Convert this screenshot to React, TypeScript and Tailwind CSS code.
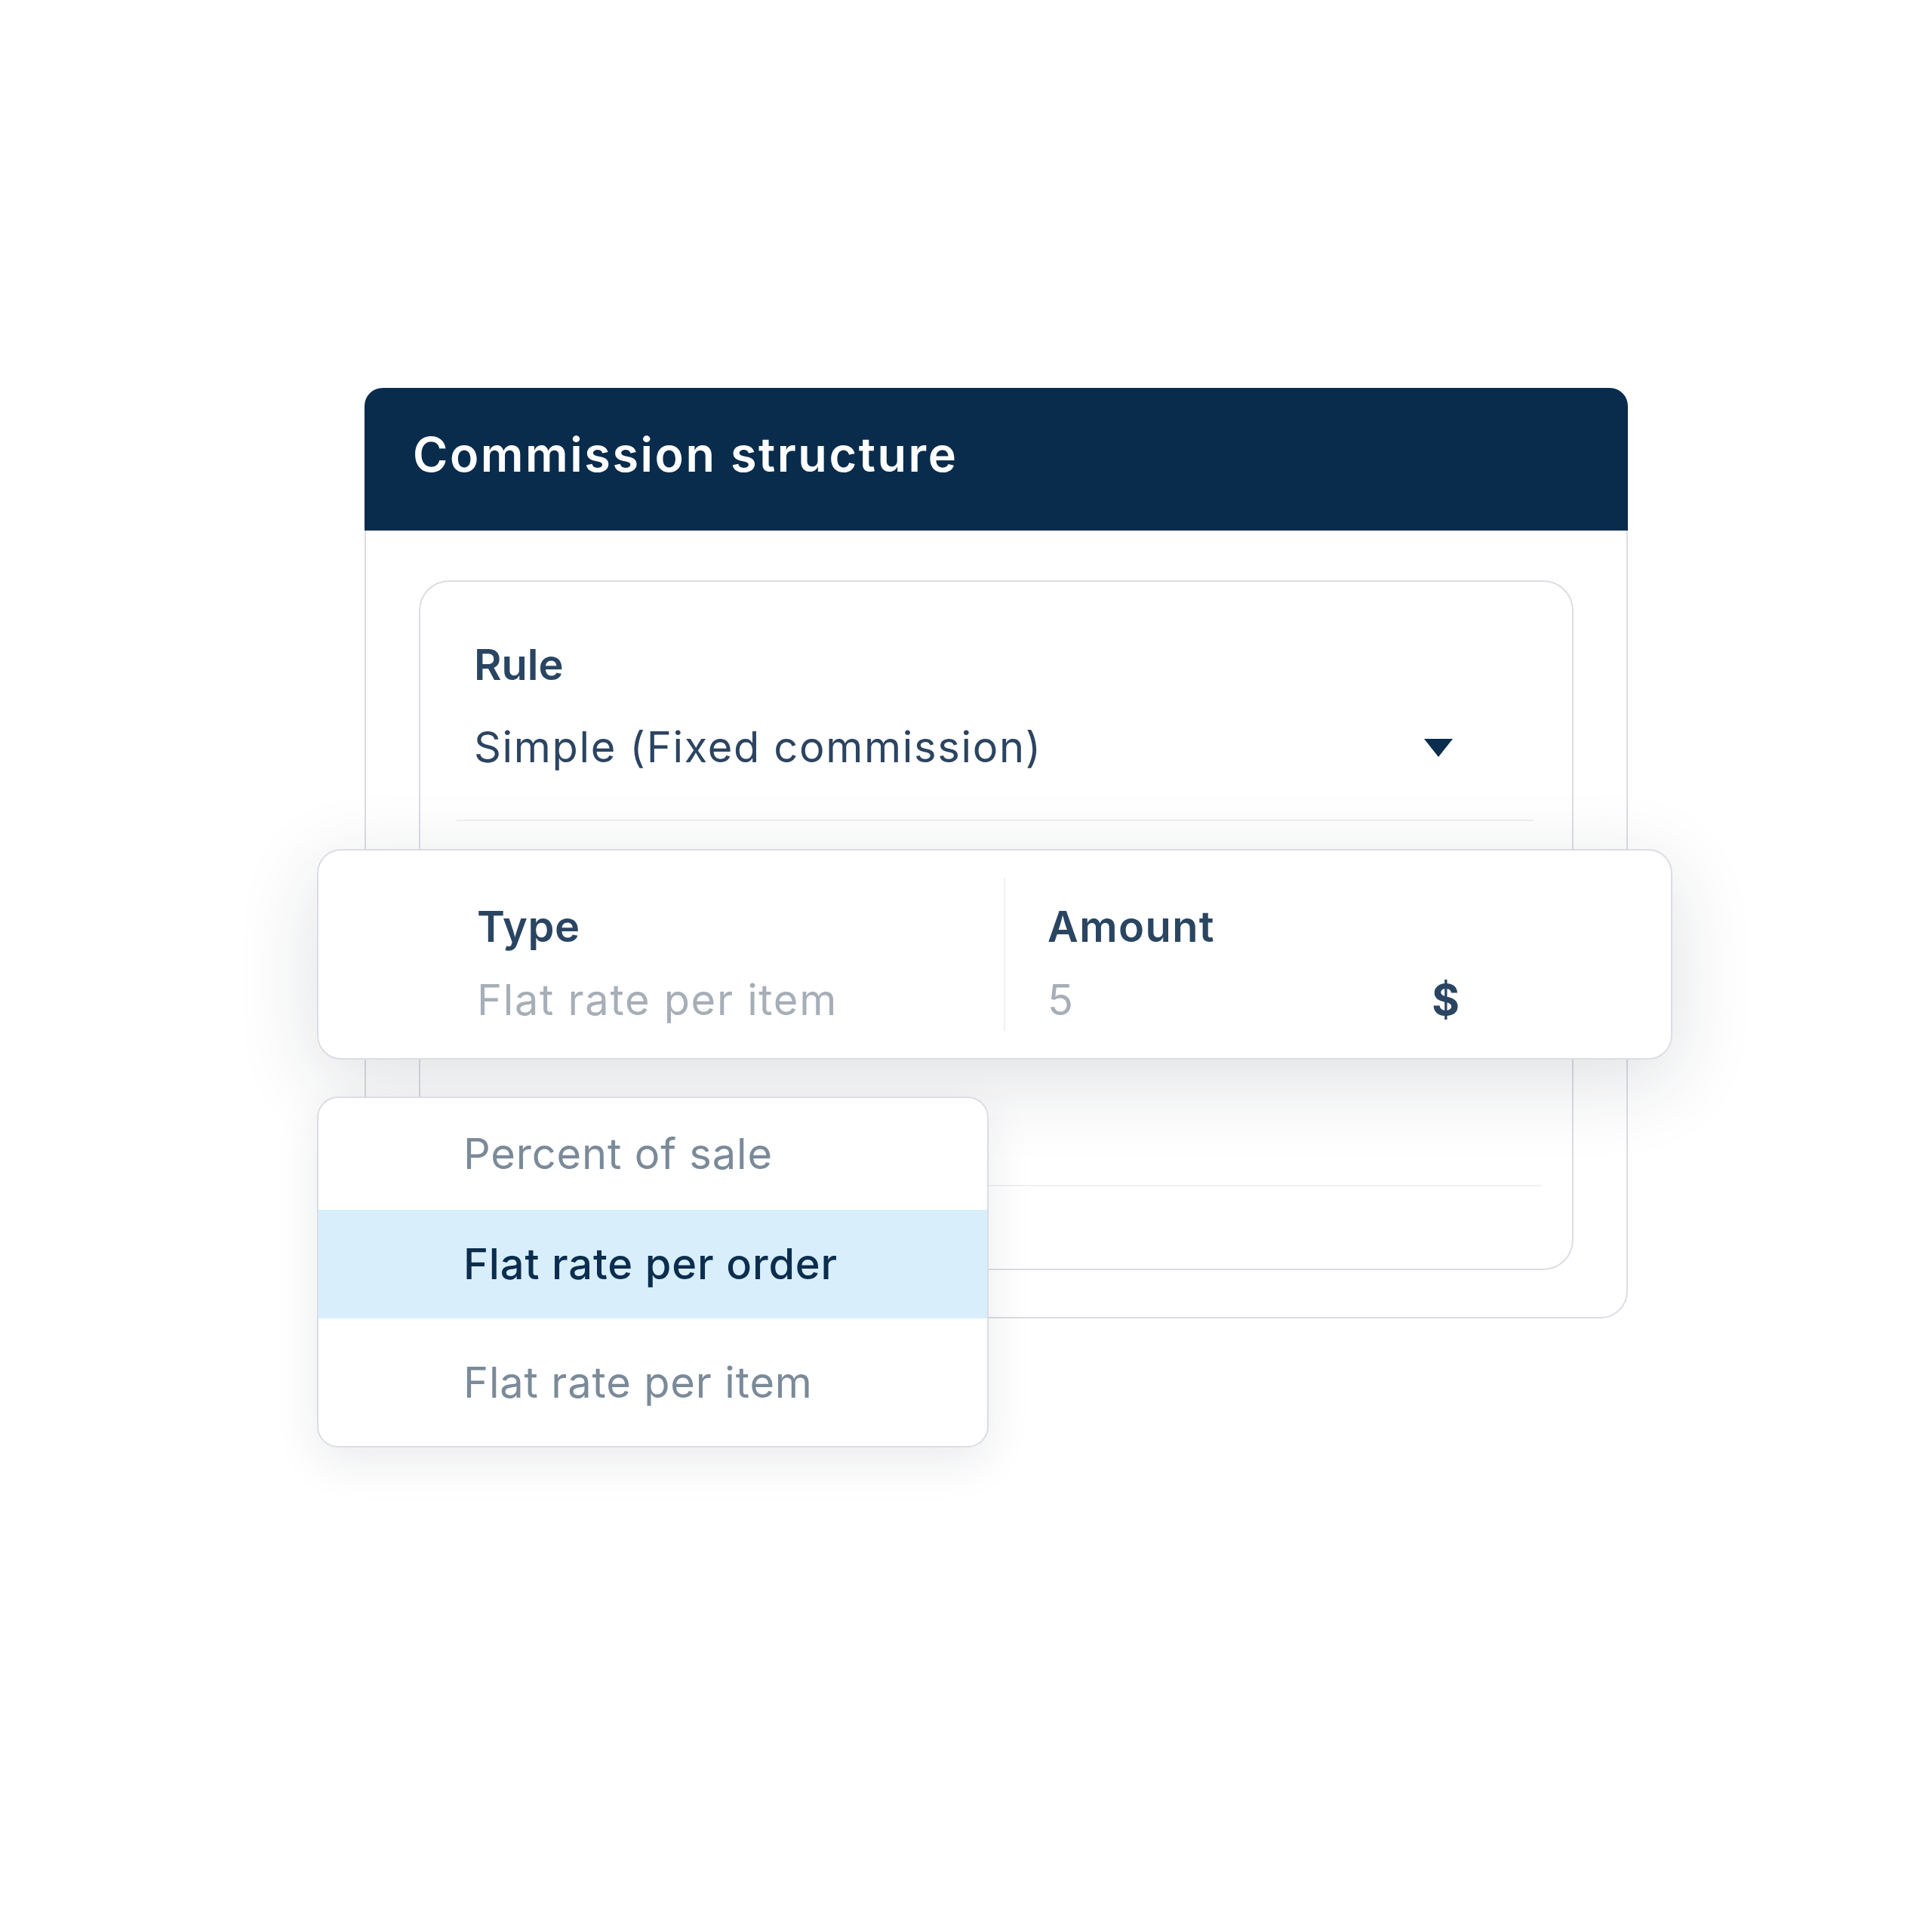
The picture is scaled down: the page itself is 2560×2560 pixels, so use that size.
import React from "react";

const options = [
  { label: "Percent of sale", active: false, h: "h-[148px]" },
  { label: "Flat rate per order", active: true, h: "h-[144px]" },
  { label: "Flat rate per item", active: false, h: "h-[169px]" },
];

function Caret() {
  return (
    <svg width="38" height="24" viewBox="0 0 38 24" className="shrink-0">
      <polygon points="0,0 38,0 19,24" fill="#0b2d4e" />
    </svg>
  );
}

export default function App() {
  return (
    <div className="min-h-[2560px] w-[2560px] bg-white pl-[483px] pt-[514px] font-['Inter',sans-serif]">
      <div className="relative w-[1674px]">
        {/* header */}
        <div className="flex h-[189px] items-center rounded-t-[24px] bg-[#0a2c4c] px-[64px] pb-[12px]">
          <h1 className="text-[63px] font-semibold leading-none tracking-[0.04em] text-white">
            Commission structure
          </h1>
        </div>

        {/* body */}
        <div className="rounded-b-[36px] border-x-2 border-b-2 border-[#dcdde3] bg-white px-[70px] pt-[66px] pb-[62px]">
          <div className="flex h-[914px] flex-col rounded-[40px] border-2 border-[#dcdde3] bg-white pt-[77px]">
            <div className="px-[71px] text-[56px] font-semibold leading-[67px] text-[#2a4562]">Rule</div>
            <div className="mt-[42px] flex items-center justify-between pl-[71px] pr-[158px]">
              <span className="text-[56px] leading-[67px] tracking-[0.03em] text-[#2b4461]">
                Simple (Fixed commission)
              </span>
              <Caret />
            </div>
            <div className="mt-[62px] ml-[48px] mr-[52px] h-[2px] bg-[#eef0f3]" />
            <div className="h-[482px]" />
            <div className="ml-[48px] mr-[40px] h-[2px] bg-[#eef0f3]" />
          </div>
        </div>

        {/* type / amount card */}
        <div className="absolute left-[-63px] top-[611px] flex h-[279px] w-[1796px] items-stretch rounded-[32px] border-2 border-[#dcdde3] bg-white shadow-[0_28px_110px_rgba(20,32,52,0.14)]">
          <div className="flex w-[908px] flex-col pl-[210px] pt-[68px]">
            <span className="text-[56px] font-semibold leading-[67px] tracking-[0.01em] text-[#2a4562]">Type</span>
            <span className="mt-[30px] text-[56px] leading-[67px] tracking-[0.03em] text-[#a6aeb8]">
              Flat rate per item
            </span>
          </div>
          <div className="my-[36px] w-[2px] bg-[#f0f1f3]" />
          <div className="flex flex-1 flex-col pl-[56px] pr-[280px] pt-[68px]">
            <span className="text-[56px] font-semibold leading-[67px] tracking-[0.025em] text-[#2a4562]">Amount</span>
            <div className="mt-[30px] flex justify-between">
              <span className="text-[56px] leading-[67px] text-[#a6aeb8]">5</span>
              <span className="text-[56px] font-bold leading-[67px] text-[#2a4562]">$</span>
            </div>
          </div>
        </div>

        {/* dropdown */}
        <div className="absolute left-[-63px] top-[939px] w-[890px] overflow-hidden rounded-[28px] border-2 border-[#dcdde3] bg-white shadow-[0_18px_60px_rgba(20,32,52,0.09)]">
          {options.map((o) => (
            <div
              key={o.label}
              className={
                o.h +
                " flex items-center pl-[192px] text-[56px] leading-none tracking-[0.015em] " +
                (o.active ? "bg-[#d8eefb] font-medium text-[#0b2d4e]" : "text-[#7b8a99]")
              }
            >
              {o.label}
            </div>
          ))}
        </div>
      </div>
    </div>
  );
}
